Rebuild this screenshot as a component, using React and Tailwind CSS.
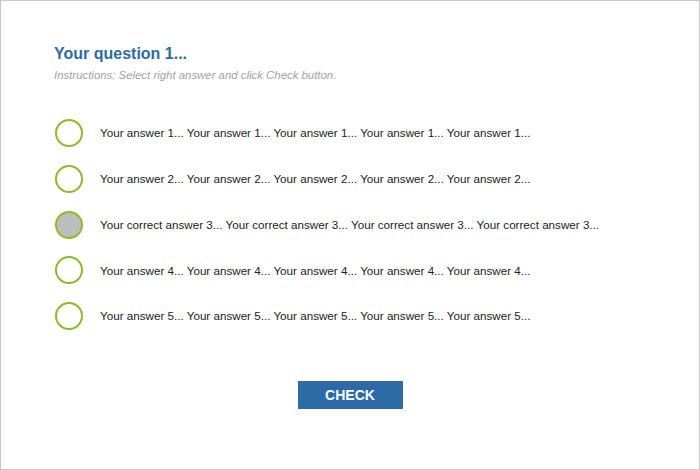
import React, { useState } from 'react';

const answers = [
    'Your answer 1... Your answer 1... Your answer 1... Your answer 1... Your answer 1...',
    'Your answer 2... Your answer 2... Your answer 2... Your answer 2... Your answer 2...',
    'Your correct answer 3... Your correct answer 3... Your correct answer 3... Your correct answer 3...',
    'Your answer 4... Your answer 4... Your answer 4... Your answer 4... Your answer 4...',
    'Your answer 5... Your answer 5... Your answer 5... Your answer 5... Your answer 5...',
];

export default function App() {
    const [selected, setSelected] = useState(2);

    return (
        <div className="w-[700px] h-[470px] bg-white border border-[#c8c8c8] font-['Liberation_Sans',Arial,sans-serif]">
            <div className="pl-[53px] pt-[43px]">
                <h1 className="text-[16px] font-bold text-[#2f6aa3] leading-[20px]">Your question 1...</h1>
                <p className="mt-[4px] text-[11.4px] italic text-[#a3a3a3] leading-[14px]">
                    Instructions: Select right answer and click Check button.
                </p>

                {/* Answers */}
                <div className="mt-[37px] flex flex-col gap-[17.75px]">
                    {answers.map((a, i) => (
                        <div key={i} className="flex items-center h-[28px] cursor-pointer" onClick={() => setSelected(i)}>
                            <span
                                className={
                                    i === selected
                                        ? 'ml-[1px] w-[28px] h-[28px] rounded-full border-2 border-[#8cbb2a] bg-[#bdbdbd] shrink-0'
                                        : 'ml-[1px] w-[28px] h-[28px] rounded-full border-2 border-[#8cbb2a] bg-white shrink-0'
                                }
                            />
                            <span className="ml-[17px] text-[11.65px] text-[#222]">{a}</span>
                        </div>
                    ))}
                </div>
            </div>

            <div className="flex justify-center mt-[51px]">
                <button className="w-[105px] h-[28px] bg-[#2c6ba6] text-white font-bold text-[14px] leading-none">
                    CHECK
                </button>
            </div>
        </div>
    );
}
